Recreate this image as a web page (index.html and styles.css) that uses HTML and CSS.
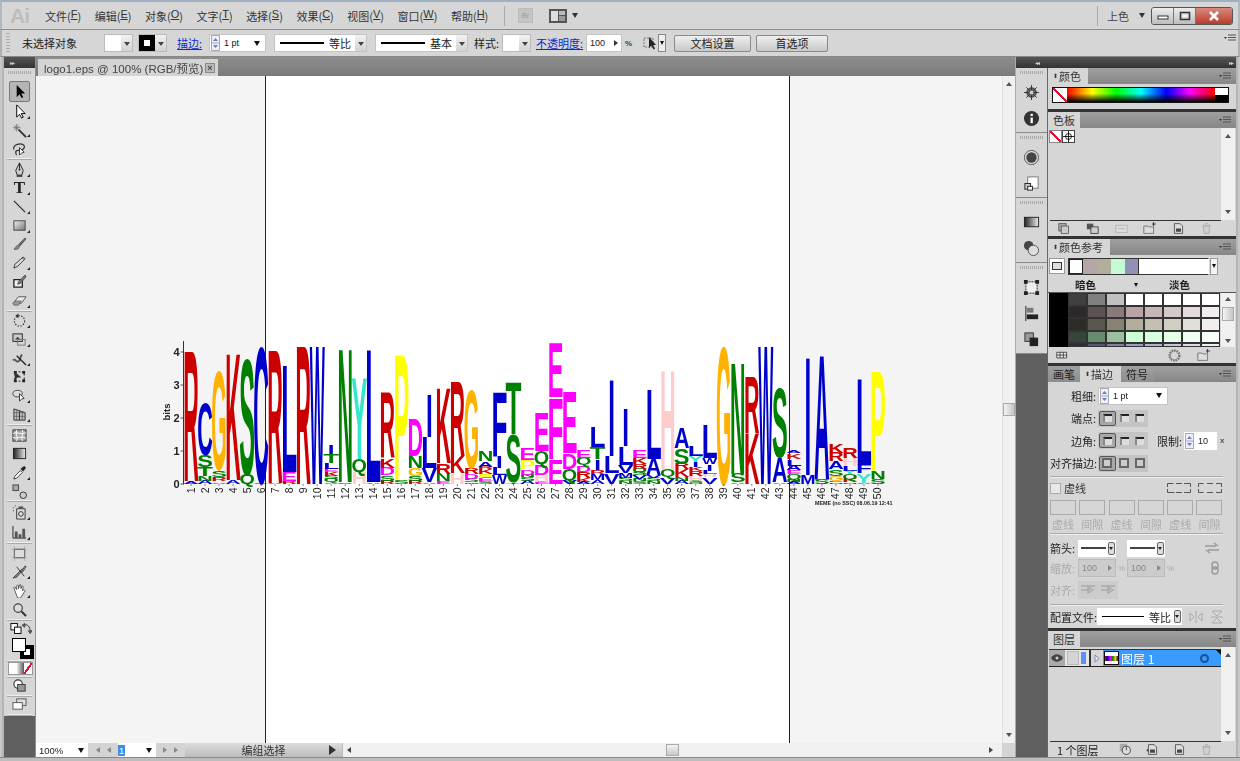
FILE: index.html
```html
<!DOCTYPE html>
<html lang="zh">
<head>
<meta charset="utf-8">
<title>Adobe Illustrator</title>
<link rel="stylesheet" href="styles.css">
</head>
<body>
<svg class="defs" width="0" height="0">
  <defs>
    <linearGradient id="gr" x1="0" y1="0" x2="1" y2="1"><stop offset="0" stop-color="#eee"/><stop offset="1" stop-color="#777"/></linearGradient>
    <linearGradient id="grh" x1="0" y1="0" x2="1" y2="0"><stop offset="0" stop-color="#222"/><stop offset="1" stop-color="#eee"/></linearGradient>
    <symbol id="menu" viewBox="0 0 12 8"><path d="M0 3h3L1.500 5z" fill="#333"/><path d="M4 1h8M4 3.500h8M4 6h8" stroke="#555"/></symbol>
    <symbol id="spin" viewBox="0 0 9 16"><rect x=".5" y=".5" width="8" height="15" fill="#eef" stroke="#aaa"/><path d="M.5 8h8" stroke="#aaa"/><path d="M4.500 3L7 6H2z" fill="#6a7fc0"/><path d="M2 10h5l-2.500 3z" fill="#6a7fc0"/></symbol>
    <symbol id="doc" viewBox="0 0 16 16"><path d="M3 2h7l3 3v9H3z" fill="#ddd" stroke="#444"/><path d="M5 8h6v4H5z" fill="#444"/></symbol>
    <symbol id="trash" viewBox="0 0 16 16"><path d="M4 5h8l-1 9H5z" fill="#ccc" stroke="#888"/><path d="M3 4h10M6 2h4" stroke="#888"/></symbol>
  </defs>
</svg>

<div class="window">
  <header class="titlebar">
    <span class="ai">Ai</span>
    <nav class="menus">
      <span class="m1">文件(<u>F</u>)</span><span class="m1">编辑(<u>E</u>)</span><span class="m1">对象(<u>O</u>)</span><span class="m1">文字(<u>T</u>)</span><span class="m1">选择(<u>S</u>)</span><span class="m1">效果(<u>C</u>)</span><span class="m1">视图(<u>V</u>)</span><span class="m1">窗口(<u>W</u>)</span><span class="m1">帮助(<u>H</u>)</span>
    </nav>
    <i class="vsep"></i>
    <span class="br">Br</span>
    <svg class="layout" viewBox="0 0 18 14"><rect width="18" height="14" fill="#555"/><rect x="2" y="2" width="7" height="10" fill="#ddd"/><rect x="10" y="2" width="6" height="4" fill="#bbb"/><rect x="10" y="7" width="6" height="5" fill="#999"/></svg>
    <b class="tri"></b>
    <span class="spacer"></span>
    <i class="vsep"></i>
    <span class="workspace">上色</span>
    <b class="tri"></b>
    <div class="winbtns">
      <span class="wb"><svg viewBox="0 0 12 8" width="12" height="8"><rect x="1" y="4" width="10" height="3" fill="#fff" stroke="#333"/></svg></span>
      <span class="wb"><svg viewBox="0 0 12 10" width="12" height="10"><rect x="1.500" y="1.500" width="9" height="7" fill="none" stroke="#333" stroke-width="1.500"/><rect x="4" y="4" width="4" height="2" fill="#fff"/></svg></span>
      <span class="wb close"><svg viewBox="0 0 12 10" width="12" height="10"><path d="M2 1l8 8M10 1l-8 8" stroke="#fff" stroke-width="2.600"/></svg></span>
    </div>
  </header>

  <div class="control">
    <span class="grip"></span>
    <span class="noselect">未选择对象</span>
    <span class="swatch w29"><i class="white"></i><b class="dd"></b></span>
    <span class="swatch w29 ml5"><i class="strokebox"></i><b class="dd"></b></span>
    <a class="lnk ml10">描边:</a>
    <span class="pt"><svg class="sp" width="9" height="16"><use href="#spin"/></svg><span class="ptv">1 pt</span><b class="tri dark"></b></span>
    <span class="linebox w93"><i class="ln thin"></i><span>等比</span><b class="dd"></b></span>
    <span class="linebox w93 ml8"><i class="ln thick"></i><span>基本</span><b class="dd"></b></span>
    <span class="lab ml6">样式:</span>
    <span class="swatch w29 ml4"><i class="white"></i><b class="dd"></b></span>
    <a class="lnk ml5">不透明度:</a>
    <span class="pct"><span>100</span><b class="rt"></b></span>
    <span class="pc">%</span>
    <svg class="ib" width="16" height="16" viewBox="0 0 16 16"><rect x="2" y="3" width="9" height="9" fill="none" stroke="#777" stroke-dasharray="2 1"/><path d="M7 2v11l2.500-2.500 2 4 1.500-1-2-3.500h3z" fill="#222"/></svg>
    <span class="mini"><b class="tri dark small"></b></span>
    <span class="btn w77">文档设置</span>
    <span class="btn w72">首选项</span>
    <span class="spacer"></span>
    <svg class="ctlmenu" width="12" height="8"><use href="#menu"/></svg>
  </div>

  <div class="work">
    <div class="frame"></div>

    <aside class="tools">
      <div class="collapse"><b class="dbl">▸▸</b></div>
      <div class="dots"></div>
      <div class="tg first">
        <span class="t sel"><svg viewBox="0 0 16 16"><path d="M5 1v13l3-3 2.300 4 1.700-1-2.200-3.800H14z" fill="#000"/></svg></span>
        <span class="t c"><svg viewBox="0 0 16 16"><path d="M5 1v13l3-3 2.300 4 1.700-1-2.200-3.800H14z" fill="#fff" stroke="#000"/></svg></span>
        <span class="t c"><svg viewBox="0 0 16 16"><path d="M7 7l8 8" stroke="#333" stroke-width="2"/><path d="M5 1v8M1 5h8M2.500 2.500l5 5M7.500 2.500l-5 5" stroke="#777"/></svg></span>
        <span class="t"><svg viewBox="0 0 16 16"><path d="M2 9c-2-5 8-8 11-4 1 2-1 5-5 5-3 0-4 0-4 2 0 1 0 2 1 3" fill="none" stroke="#333" stroke-width="1.300"/><path d="M8 7v8l2-2 3-1z" fill="#fff" stroke="#333"/></svg></span>
      </div>
      <div class="tg">
        <span class="t c"><svg viewBox="0 0 16 16"><path d="M8 1l4 8-1.500 5h-5L4 9z" fill="#ccc" stroke="#222"/><path d="M8 1v6" stroke="#222"/><circle cx="8" cy="8" r="1" fill="#222"/><path d="M5 15h6" stroke="#222" stroke-width="1.500"/></svg></span>
        <span class="t c ttext">T</span>
        <span class="t c"><svg viewBox="0 0 16 16"><path d="M2 2l12 12" stroke="#222" stroke-width="1.200"/></svg></span>
        <span class="t c"><svg viewBox="0 0 16 16"><rect x="2" y="3" width="12" height="10" fill="url(#gr)" stroke="#444"/></svg></span>
        <span class="t"><svg viewBox="0 0 16 16"><path d="M14 1L7 8l1.500 1.500L15 2z" fill="#666" stroke="#333" stroke-width=".6"/><path d="M6 9c-2 0-2 3-4 4 2 1 6 0 6-3z" fill="#888" stroke="#444" stroke-width=".6"/></svg></span>
        <span class="t c"><svg viewBox="0 0 16 16"><path d="M12 2l2 2-8 8-4 2 1-4z" fill="#ddd" stroke="#333"/><path d="M11 3l2 2" stroke="#333"/></svg></span>
        <span class="t"><svg viewBox="0 0 16 16"><path d="M2 6h9v8H2z" fill="#eee" stroke="#222" stroke-width="1.400"/><path d="M14 1L7 8l-1 3 3-1 6-7z" fill="#777" stroke="#333" stroke-width=".7"/></svg></span>
        <span class="t c"><svg viewBox="0 0 16 16"><path d="M1 11l6-7h8l-5 7z" fill="#e8e8e8" stroke="#555"/><path d="M1 11l2-2.500h7L8 11l-1 2H2z" fill="#999" stroke="#555" stroke-width=".7"/></svg></span>
      </div>
      <div class="tg">
        <span class="t c"><svg viewBox="0 0 16 16"><circle cx="8" cy="8.500" r="5.500" fill="none" stroke="#333" stroke-dasharray="1.500 1.500" stroke-width="1.200"/><path d="M7 .5v5L3.500 3z" fill="#333"/></svg></span>
        <span class="t c"><svg viewBox="0 0 16 16"><rect x="1" y="2" width="10" height="8" fill="#ccc" stroke="#222"/><path d="M3 8l3-3 3 3z" fill="#444"/><rect x="6" y="8" width="8" height="6" fill="none" stroke="#777"/></svg></span>
        <span class="t c"><svg viewBox="0 0 16 16"><path d="M1 10c3-3 3 3 6 1s1-6 4-7" fill="none" stroke="#555" stroke-width="2"/><path d="M5 5l10 10" stroke="#222" stroke-width="1.400"/></svg></span>
        <span class="t"><svg viewBox="0 0 16 16"><rect x="3" y="3" width="10" height="10" fill="none" stroke="#222" stroke-dasharray="2 2"/><path d="M2 2h3v3H2zM11 2h3v3h-3zM2 11h3v3H2zM11 11h3v3h-3z" fill="#222"/><path d="M3 3v9l3-3h4z" fill="#333"/></svg></span>
        <span class="t c"><svg viewBox="0 0 16 16"><ellipse cx="6" cy="6" rx="5" ry="3.500" fill="#ddd" stroke="#444"/><path d="M8 6v8l2-2 3-1z" fill="#fff" stroke="#333"/></svg></span>
        <span class="t c"><svg viewBox="0 0 16 16"><path d="M2 2l6 2v10H2zM8 4l6 2v8H8z" fill="#bbb" stroke="#333"/><path d="M2 6h12M2 10h12M5 3v11M11 5v9" stroke="#444" stroke-width=".6"/></svg></span>
      </div>
      <div class="tg">
        <span class="t"><svg viewBox="0 0 16 16"><rect x="1" y="2" width="14" height="12" fill="#aaa" stroke="#333"/><path d="M1 6c4-3 9 2 14-1M1 10c4 2 9-2 14 1M5 2c-2 4 2 8 0 12M11 2c2 4-2 8 0 12" fill="none" stroke="#fff"/></svg></span>
        <span class="t"><svg viewBox="0 0 16 16"><rect x="1.500" y="2.500" width="13" height="11" fill="url(#grh)" stroke="#222"/></svg></span>
        <span class="t c"><svg viewBox="0 0 16 16"><path d="M2 15l1-3 6-6 2 2-6 6z" fill="#fff" stroke="#333"/><path d="M9 4l3 3 3-4-2-2z" fill="#222"/></svg></span>
        <span class="t"><svg viewBox="0 0 16 16"><rect x="1" y="1" width="6" height="6" fill="#aaa" stroke="#444"/><circle cx="12" cy="12" r="3.500" fill="#ccc" stroke="#333"/><path d="M7 7l2 2" stroke="#888" stroke-dasharray="1 1"/></svg></span>
      </div>
      <div class="tg two">
        <span class="t c"><svg viewBox="0 0 16 16"><path d="M5 4h9v11H5z" fill="#ddd" stroke="#333"/><rect x="7" y="1.500" width="5" height="2.500" fill="#555"/><circle cx="9.500" cy="9.500" r="2.500" fill="none" stroke="#333"/><path d="M1 3h1M3 1h1M1 6h1" stroke="#333"/></svg></span>
        <span class="t c"><svg viewBox="0 0 16 16"><path d="M1 2v13h14" fill="none" stroke="#222"/><path d="M3 8h3v7H3zM7 11h3v4H7zM11 5h3v10h-3z" fill="#555"/></svg></span>
      </div>
      <div class="tg">
        <span class="t"><svg viewBox="0 0 16 16"><rect x="2.500" y="3.500" width="11" height="9" fill="#ddd" stroke="#333"/><path d="M0 3.500h16M0 12.500h16M2.500 0v16M13.500 0v16" stroke="#999" stroke-width=".6"/></svg></span>
        <span class="t c"><svg viewBox="0 0 16 16"><path d="M1 15L11 5l1 1L5 14z" fill="#888" stroke="#222" stroke-width=".7"/><path d="M10 8l4-6 1 1-4 6zM5 3l8 10" stroke="#333" fill="#ddd"/></svg></span>
        <span class="t c"><svg viewBox="0 0 16 16"><path d="M3 8L2 5l1-1 2 3V3l1-1 1 1v3l1-4h1.500v4l1.500-3 1 1-1 4 2-1 1 1-3 5-2 3H6z" fill="#fff" stroke="#333" stroke-width=".8"/></svg></span>
        <span class="t"><svg viewBox="0 0 16 16"><circle cx="6.500" cy="6.500" r="4.500" fill="#ddd" stroke="#444" stroke-width="1.300"/><path d="M10 10l5 5" stroke="#333" stroke-width="2.200"/></svg></span>
      </div>
      <div class="tg colors">
        <div class="swaprow">
          <svg width="13" height="13" viewBox="0 0 13 13"><rect x="1" y="1" width="7" height="7" fill="#fff" stroke="#000"/><rect x="5" y="5" width="7" height="7" fill="#fff" stroke="#000"/></svg>
          <svg width="11" height="13" viewBox="0 0 11 13"><path d="M1 3c5-2 8 1 8 8M0 3l3-2v4zM7 9l2 3 2-3z" fill="none" stroke="#333"/></svg>
        </div>
        <div class="fillstroke"><i class="stk"><i></i></i><i class="fil"></i></div>
      </div>
      <div class="tg modes">
        <span class="modebox"><i class="mw"></i><i class="mg"></i><i class="mn"></i></span>
      </div>
      <div class="tg mono"><span class="t"><svg viewBox="0 0 16 16"><circle cx="6.500" cy="6.500" r="4.500" fill="#fff" stroke="#333" stroke-width="1.200"/><rect x="6" y="7" width="8" height="7" fill="#999" stroke="#333"/></svg></span></div>
      <div class="tg mono"><span class="t"><svg viewBox="0 0 16 16"><rect x="5" y="2" width="10" height="7" fill="#ddd" stroke="#555"/><rect x="1" y="6" width="10" height="7" fill="#fff" stroke="#555"/></svg></span></div>
      <div class="tools-end"></div>
    </aside>

    <main class="doc">
      <div class="tabbar">
        <div class="tab"><span class="tabtext">logo1.eps @ 100% (RGB/预览)</span><span class="tabx">×</span></div>
      </div>
      <div class="docmid">
        <div class="canvas">
          <div class="paste left"></div>
          <div class="artboard"></div>
          <div class="paste"></div>
          <svg id="logo" class="logo" viewBox="160 335 735 175" width="735" height="175"></svg>
        </div>
        <div class="vscroll">
          <b class="arr up"></b>
          <span class="vthumb"></span>
          <b class="arr down"></b>
        </div>
      </div>
      <div class="docbottom">
        <span class="zoomsel">100%<b class="tri dark"></b></span>
        <span class="nav"><b class="nv l2"></b><b class="nv l1"></b></span>
        <span class="pagesel"><em>1</em><b class="tri dark"></b></span>
        <span class="nav r"><b class="nv r1"></b><b class="nv r2"></b></span>
        <span class="status">编组选择<b class="rt big"></b></span>
        <span class="hscroll"><b class="harr l"></b><span class="hthumb"></span><b class="harr rr"></b></span>
      </div>
    </main>

    <section class="dock">
      <div class="dockbar"><b class="dbl">◂◂</b><b class="dbl">▸▸</b></div>
      <div class="dockbody">
        <div class="strip">
          <div class="sg">
            <div class="dots"></div>
            <svg class="si" viewBox="0 0 18 18"><circle cx="9" cy="9" r="5" fill="#666" stroke="#333"/><path d="M9 1v16M1 9h16M3.500 3.500l11 11M14.500 3.500l-11 11" stroke="#333"/><circle cx="9" cy="9" r="2" fill="#ccc"/></svg>
            <svg class="si" viewBox="0 0 18 18"><circle cx="9" cy="9" r="8" fill="#333"/><rect x="8" y="8" width="2.400" height="6" fill="#fff"/><rect x="8" y="4" width="2.400" height="2.400" fill="#fff"/></svg>
          </div>
          <div class="sg">
            <div class="dots"></div>
            <svg class="si" viewBox="0 0 18 18"><circle cx="9" cy="9" r="7.500" fill="#ddd" stroke="#555"/><circle cx="9" cy="9" r="5.500" fill="#444"/></svg>
            <svg class="si" viewBox="0 0 18 18"><rect x="5" y="2" width="11" height="12" fill="#fff" stroke="#777"/><rect x="2" y="9" width="6" height="6" fill="#ccc" stroke="#222"/><rect x="5" y="12" width="5" height="4" fill="#fff" stroke="#222"/></svg>
          </div>
          <div class="sg">
            <div class="dots"></div>
            <svg class="si" viewBox="0 0 18 18"><rect x="1.500" y="3.500" width="15" height="10" fill="url(#grh)" stroke="#222"/></svg>
            <svg class="si" viewBox="0 0 18 18"><circle cx="6" cy="6" r="5" fill="#444"/><circle cx="11" cy="11" r="5.500" fill="#ddd" stroke="#555"/></svg>
          </div>
          <div class="sg long">
            <div class="dots"></div>
            <svg class="si" viewBox="0 0 18 18"><rect x="3" y="3" width="12" height="12" fill="#eee" stroke="#222" stroke-dasharray="2 1"/><path d="M1 1h4v4H1zM13 1h4v4h-4zM1 13h4v4H1zM13 13h4v4h-4z" fill="#222"/></svg>
            <svg class="si" viewBox="0 0 18 18"><path d="M3 1v16" stroke="#222"/><rect x="4" y="3" width="7" height="5" fill="#777"/><rect x="4" y="10" width="12" height="5" fill="#222"/></svg>
            <svg class="si" viewBox="0 0 18 18"><rect x="2" y="2" width="9" height="9" fill="#999" stroke="#333"/><rect x="7" y="7" width="9" height="9" fill="#222"/></svg>
          </div>
          <div class="stripend"></div>
        </div>

        <div class="panels">
          <div class="panel p-color">
            <div class="ptabs"><span class="ptab w40"><i class="updn">⬍</i>颜色</span><span class="pfill"><svg width="12" height="8"><use href="#menu"/></svg></span></div>
            <div class="pbody colorbody">
              <div class="spectrum"><i class="none"></i><i class="rainbow"></i><i class="bw"></i></div>
            </div>
          </div>
          <div class="panel p-swatch">
            <div class="ptabs"><span class="ptab w32">色板</span><span class="pfill"><svg width="12" height="8"><use href="#menu"/></svg></span></div>
            <div class="pbody listbody">
              <div class="listmain">
                <div class="swrow"><i class="none sq"></i><i class="reg sq"><svg viewBox="0 0 13 13"><circle cx="6.500" cy="6.500" r="3.500" fill="none" stroke="#000"/><path d="M6.500 0v13M0 6.500h13" stroke="#000"/></svg></i></div>
              </div>
              <div class="sbar"><b class="arr up"></b><b class="arr down"></b></div>
            </div>
            <div class="pfoot">
              <svg class="fi" viewBox="0 0 16 16"><rect x="1" y="2" width="9" height="9" fill="#aaa" stroke="#555"/><rect x="4" y="5" width="9" height="9" fill="#ccc" stroke="#555"/></svg>
              <svg class="fi" viewBox="0 0 16 16"><rect x="1" y="2" width="8" height="7" fill="#555"/><rect x="6" y="6" width="9" height="8" fill="#ccc" stroke="#333"/></svg>
              <svg class="fi dim" viewBox="0 0 16 16"><rect x="1" y="4" width="14" height="9" fill="#ddd" stroke="#999"/><path d="M4 8h8" stroke="#999"/></svg>
              <svg class="fi" viewBox="0 0 16 16"><path d="M1 5h5l1 1h6v8H1z" fill="#ddd" stroke="#666"/><path d="M13 0v5M11 2.500h5" stroke="#222"/></svg>
              <svg class="fi" viewBox="0 0 16 16"><use href="#doc"/></svg>
              <svg class="fi dim" viewBox="0 0 16 16"><use href="#trash"/></svg>
            </div>
          </div>
          <div class="panel p-guide">
            <div class="ptabs"><span class="ptab w62"><i class="updn">⬍</i>颜色参考</span><span class="pfill"><svg width="12" height="8"><use href="#menu"/></svg></span></div>
            <div class="pbody guide">
              <div class="harm">
                <span class="hbase"><i></i></span>
                <span class="hbar"><i class="c0"></i><i class="c1"></i><i class="c2"></i><i class="c3"></i><i class="c4"></i></span>
                <span class="hdrop"><b class="tri dark small"></b></span>
              </div>
              <div class="shade"><span>暗色</span><b class="tri dark small"></b><span>淡色</span></div>
              <div class="gridwrap">
                <div class="blk"></div>
                <div class="cgrid">
                  <i class="a1"></i><i class="a2"></i><i class="a3"></i><i class="w"></i><i class="w"></i><i class="w"></i><i class="w"></i><i class="w"></i>
                  <i class="b1"></i><i class="b2"></i><i class="b3"></i><i class="b4"></i><i class="b5"></i><i class="b6"></i><i class="b7"></i><i class="b8"></i>
                  <i class="c1x"></i><i class="c2x"></i><i class="c3x"></i><i class="c4x"></i><i class="c5x"></i><i class="c6x"></i><i class="c7x"></i><i class="c8x"></i>
                  <i class="d1"></i><i class="d2"></i><i class="d3"></i><i class="d4"></i><i class="d5"></i><i class="d6"></i><i class="d7"></i><i class="d8"></i>
                  <i class="e1"></i><i class="e2"></i><i class="e3"></i><i class="e4"></i><i class="e5"></i><i class="e6"></i><i class="e7"></i><i class="e8"></i>
                </div>
                <div class="sbar grey"><b class="arr up"></b><span class="gthumb"></span><b class="arr down"></b></div>
              </div>
              <div class="gfoot">
                <svg class="fi" viewBox="0 0 16 12"><path d="M1 2h12v7H1zM1 5.500h12M5 2v7M9 2v7" fill="#eee" stroke="#333"/></svg>
                <span class="spacer"></span>
                <svg class="fi dim" viewBox="0 0 16 16"><circle cx="8" cy="8" r="6" fill="none" stroke="#333" stroke-width="3" stroke-dasharray="2 1"/></svg>
                <svg class="fi" viewBox="0 0 16 16"><path d="M1 5h5l1 1h6v8H1z" fill="#ddd" stroke="#666"/><path d="M13 0v5M11 2.500h5" stroke="#222"/></svg>
              </div>
            </div>
          </div>
          <div class="panel p-stroke">
            <div class="ptabs"><span class="ptab off w32">画笔</span><span class="ptab w41"><i class="updn">⬍</i>描边</span><span class="ptab off w33">符号</span><span class="pfill"><svg width="12" height="8"><use href="#menu"/></svg></span></div>
            <div class="pbody stroke">
              <div class="row r1st"><label class="l46">粗细:</label><span class="pt panelpt"><svg class="sp" width="9" height="16"><use href="#spin"/></svg><span class="ptv">1 pt</span><b class="tri dark"></b></span></div>
              <div class="row"><label class="l46">端点:</label><span class="seg"><i class="on"><u class="cap"></u></i><i><u class="cap"></u></i><i><u class="cap"></u></i></span></div>
              <div class="row"><label class="l46">边角:</label><span class="seg"><i class="on"><u class="cap"></u></i><i><u class="cap"></u></i><i><u class="cap"></u></i></span><label class="limit">限制:</label><span class="lim"><svg class="sp" width="9" height="16"><use href="#spin"/></svg><em>10</em></span><span class="x">x</span></div>
              <div class="row"><label class="l46 wide">对齐描边:</label><span class="seg"><i class="on"><u class="sq2"></u></i><i><u class="sq2"></u></i><i><u class="sq2"></u></i></span></div>
              <hr class="rule r-a">
              <div class="row dash"><span class="check"></span><label>虚线</label><span class="spacer"></span>
                <svg width="24" height="10" viewBox="0 0 24 10"><path d="M.5 4V.5h6M9 .5h6M17 .5h6.500V4M.5 6v3.500h7M9 9.500h6M17 9.500h6.500V6" fill="none" stroke="#555"/></svg>
                <svg class="dashb" width="24" height="10" viewBox="0 0 24 10"><path d="M.5 4V.5h5M18 .5h5.500V4M.5 6v3.500h5M18 9.500h5.500V6M9 .5h6M9 9.500h6" fill="none" stroke="#555"/></svg>
              </div>
              <div class="boxes"><i></i><i></i><i></i><i></i><i></i><i></i></div>
              <div class="boxlabels"><span>虚线</span><span>间隙</span><span>虚线</span><span>间隙</span><span>虚线</span><span>间隙</span></div>
              <hr class="rule">
              <div class="row arrows"><label>箭头:</label><span class="asel"><i></i><b class="dropbtn"></b></span><span class="asel a2"><i></i><b class="dropbtn"></b></span><span class="spacer"></span><svg class="swapi" width="16" height="12" viewBox="0 0 16 12"><path d="M1 4h11M10 1l4 3M15 8H4M6 11L2 8" fill="none" stroke="#999" stroke-width="1.300"/></svg></div>
              <div class="row scale"><label class="dim">缩放:</label><span class="num"><em>100</em><b class="rt"></b></span><span class="dim pcs">%</span><span class="num"><em>100</em><b class="rt"></b></span><span class="dim pcs">%</span><span class="spacer"></span><svg class="swapi" width="10" height="14" viewBox="0 0 10 14"><rect x="2" y="1" width="6" height="7" rx="3" fill="none" stroke="#999" stroke-width="1.400"/><rect x="2" y="6" width="6" height="7" rx="3" fill="none" stroke="#999" stroke-width="1.400"/></svg></div>
              <div class="row align"><label class="dim">对齐:</label><span class="alignbox"><svg width="16" height="12" viewBox="0 0 16 12"><path d="M1 2h14M1 6h9M8 3l5 3-5 3zM1 11h0" fill="none" stroke="#aaa" stroke-width="1.300"/></svg><svg width="16" height="12" viewBox="0 0 16 12"><path d="M1 2h14M1 6h9M8 3l5 3-5 3z" fill="none" stroke="#aaa" stroke-width="1.300"/></svg></span></div>
              <hr class="rule r-b">
              <div class="row profile"><label>配置文件:</label><span class="psel"><i></i><span>等比</span><b class="dropbtn"></b></span>
                <svg class="pi" width="14" height="12" viewBox="0 0 14 12"><path d="M7 0v12M1 2l4 4-4 4zM13 2L9 6l4 4z" fill="none" stroke="#aaa"/></svg>
                <svg class="pi" width="14" height="14" viewBox="0 0 14 14"><path d="M1 7h12M2 1h10L7 6zM2 13h10L7 8z" fill="none" stroke="#aaa"/></svg>
              </div>
            </div>
          </div>
          <div class="panel p-layers">
            <div class="ptabs"><span class="ptab w32">图层</span><span class="pfill"><svg width="12" height="8"><use href="#menu"/></svg></span></div>
            <div class="pbody listbody">
              <div class="listmain">
                <div class="layer">
                  <span class="lvis"><svg width="14" height="10" viewBox="0 0 14 10"><path d="M1 5c3-5 9-5 12 0-3 5-9 5-12 0z" fill="#444"/><circle cx="7" cy="5" r="1.500" fill="#ccc"/></svg></span>
                  <span class="llock"></span>
                  <span class="lcol"></span>
                  <span class="lexp"><svg width="6" height="9" viewBox="0 0 6 9"><path d="M1 1l4 3.500L1 8z" fill="#eef" stroke="#7a8aa0"/></svg></span>
                  <span class="lsel">
                    <span class="thumb"><i></i></span>
                    <span class="lname">图层 1</span>
                    <span class="spacer"></span>
                    <span class="ring"></span>
                    <b class="corner"></b>
                  </span>
                </div>
              </div>
              <div class="sbar"><b class="arr up"></b><b class="arr down"></b></div>
            </div>
            <div class="pfoot layersfoot">
              <span class="lcount">1 个图层</span>
              <svg class="fi" viewBox="0 0 16 16"><rect x="1" y="1" width="9" height="9" fill="#aaa"/><circle cx="9" cy="9" r="5" fill="#ddd" stroke="#333"/><path d="M9 5v4" stroke="#333"/></svg>
              <svg class="fi" viewBox="0 0 16 16"><path d="M1 9h5M4 7l-3 2 3 2" fill="none" stroke="#222"/><use href="#doc"/></svg>
              <svg class="fi" viewBox="0 0 16 16"><use href="#doc"/></svg>
              <svg class="fi dim" viewBox="0 0 16 16"><use href="#trash"/></svg>
            </div>
          </div>
        </div>
      </div>
    </section>
    <div class="frame rightf"></div>
  </div>
  <div class="bottomframe"></div>
</div>
<script src="logo.js"></script>
</body>
</html>
```
FILE: styles.css
```css
* { box-sizing: border-box; }
html, body { margin: 0; padding: 0; height: 100%; }
body { width: 1240px; height: 761px; overflow: hidden; font: 11px "Noto Sans CJK SC", "Liberation Sans", sans-serif; color: #222; background: #d6d6d6; }
.defs { position: absolute; }
i, b, em, u { font-style: normal; text-decoration: none; display: block; }
.spacer { flex: 1; }
.window { width: 1240px; height: 761px; display: flex; flex-direction: column; filter: blur(.35px); }

/* title */
.titlebar { height: 30px; display: flex; align-items: center; background: #d6d6d6; border-top: 2px solid #9fb0c0; border-left: 2px solid #b0b8c0; border-right: 2px solid #b0b8c0; border-bottom: 1px solid #8c8c8c; padding-left: 8px; flex: none; }
.ai { width: 35px; font: bold 21px "Liberation Sans", sans-serif; color: #bdbdbd; letter-spacing: -1px; }
.menus { display: flex; width: 458px; font-size: 11px; }
.m1 { margin-right: 13.500px; white-space: nowrap; color: #333; display: flex; }
.m1 u { text-decoration: underline; font-family: "Liberation Sans", sans-serif; }
.vsep { width: 1px; height: 20px; background: #aaa; }
.titlebar .vsep { margin-left: 1px; }
.br { width: 15px; height: 15px; margin-left: 13px; background: #c4c4c4; border: 1px solid #bbb; font: 7px "Liberation Sans", sans-serif; color: #999; text-align: center; line-height: 13px; }
.layout { width: 18px; height: 14px; margin-left: 16px; }
.tri { width: 0; height: 0; border-left: 3.500px solid transparent; border-right: 3.500px solid transparent; border-top: 5px solid #333; margin-left: 5px; }
.tri.small { border-left-width: 2.500px; border-right-width: 2.500px; border-top-width: 4px; margin: 0; }
.tri.dark { border-top-color: #111; }
.workspace { font-size: 11px; color: #444; margin-left: 9px; }
.workspace + .tri { margin-left: 10px; }
.winbtns { display: flex; margin: 0 5px 0 6px; width: 82px; height: 18px; border: 1px solid #555; border-radius: 3px; overflow: hidden; }
.wb { width: 22px; display: flex; align-items: center; justify-content: center; background: linear-gradient(#ececec, #bdbdbd); border-right: 1px solid #777; }
.wb.close { flex: 1; border: 0; background: linear-gradient(#d98a7e, #b83a2e); }

/* control */
.control { height: 27px; display: flex; align-items: center; background: #d6d6d6; border-bottom: 1px solid #888; border-left: 2px solid #b0b0b0; border-right: 2px solid #b0b0b0; padding-left: 4px; flex: none; }
.grip { width: 4px; height: 20px; margin-right: 12px; background: repeating-linear-gradient(#aaa 0 1px, transparent 1px 3px); }
.noselect { width: 82px; font-size: 11px; color: #222; }
.swatch { height: 18px; display: flex; background: #eee; border: 1px solid #bbb; }
.w29 { width: 29px; }
.swatch .white { flex: 1; background: #fff; }
.strokebox { flex: 1; background: #000; position: relative; display: flex; align-items: center; justify-content: center; }
.strokebox::after { content: ""; width: 6px; height: 6px; background: #fff; display: block; }
.dd { width: 11px; background: linear-gradient(#f2f2f2, #d2d2d2) ; position: relative; }
.dd::after { content: ""; position: absolute; left: 2.500px; top: 7px; border-left: 3px solid transparent; border-right: 3px solid transparent; border-top: 4px solid #444; }
.ml4 { margin-left: 4px; } .ml5 { margin-left: 5px; } .ml6 { margin-left: 6px; } .ml8 { margin-left: 8px; } .ml10 { margin-left: 10px; }
.lnk { color: #0a2bd0; font-size: 11px; text-decoration: underline; white-space: nowrap; }
.control .lnk:first-of-type { width: 24px; }
.pt { width: 57px; height: 18px; margin-left: 8px; margin-right: 8px; display: flex; align-items: center; background: #fff; border: 1px solid #c4c4c4; }
.sp { flex: none; margin-left: 1px; }
.ptv { flex: 1; font: 9px "Liberation Sans", sans-serif; margin-left: 4px; color: #111; }
.pt .tri { margin: 0 5px 0 0; }
.linebox { height: 18px; display: flex; align-items: center; background: #fff; border: 1px solid #c4c4c4; }
.w93 { width: 93px; }
.linebox .ln { flex: 1; margin: 0 5px; background: #000; }
.ln.thin { height: 1.500px; } .ln.thick { height: 2.500px; }
.linebox span { font-size: 11px; margin-right: 4px; }
.linebox .dd { align-self: stretch; }
.lab { width: 24px; white-space: nowrap; }
.pct { width: 36px; height: 18px; margin-left: 3px; display: flex; align-items: center; justify-content: space-between; background: #fff; border: 1px solid #c4c4c4; padding-left: 3px; font: 9px "Liberation Sans", sans-serif; }
.rt { width: 0; height: 0; border-top: 3px solid transparent; border-bottom: 3px solid transparent; border-left: 4px solid #333; margin-right: 3px; }
.rt.big { border-top-width: 5px; border-bottom-width: 5px; border-left-width: 7px; position: absolute; right: 3px; top: 2px; }
.pc { margin-left: 3px; font: bold 8px "Liberation Sans", sans-serif; color: #444; width: 9px; }
.ib { margin-left: 8px; }
.mini { width: 8px; height: 18px; margin-left: 0; background: #eee; border: 1px solid #888; display: flex; align-items: center; justify-content: center; }
.btn { height: 17px; margin-left: 5px; text-align: center; line-height: 15px; font-size: 11px; background: linear-gradient(#efefef, #c8c8c8); border: 1px solid #8a8a8a; border-radius: 2px; color: #222; }
.mini + .btn { margin-left: 8px; }
.w77 { width: 77px; } .w72 { width: 72px; }
.ctlmenu { align-self: flex-start; margin: 4px 2px 0 0; }

/* work */
.work { flex: 1; display: flex; min-height: 0; }
.frame { width: 4px; background: #b4b4b4; flex: none; border-left: 2px solid #c8c8c8; }
.rightf { border: 0; border-right: 2px solid #c8c8c8; }
.bottomframe { height: 4px; background: #bdbdbd; flex: none; border-top: 1px solid #888; }

/* tools */
.tools { width: 32px; flex: none; display: flex; flex-direction: column; background: #d6d6d6; border-right: 1px solid #8f8f8f; }
.collapse { height: 11px; background: linear-gradient(#555, #333); display: flex; align-items: center; padding-left: 6px; }
.dbl { font: 6px "Liberation Sans", sans-serif; color: #ccc; letter-spacing: -1px; }
.dots { height: 3px; margin: 3px 4px 0; background: repeating-linear-gradient(90deg, #aaa 0 1px, transparent 1px 2px); flex: none; }
.tg { padding: 1px 0 0; border-bottom: 1px solid #eee; display: flex; flex-direction: column; margin: 0 3px; flex: none; box-shadow: 0 1px 0 #aaa; }
.tg.first { padding-top: 8px; margin-top: 0; }
.tg .t { height: 18.700px; display: flex; align-items: center; justify-content: center; position: relative; }
.tg.two .t { height: 19.700px; }
.t svg { width: 15px; height: 15px; display: block; }
.t.sel { width: 21px; height: 21px; margin: -1px 2px 0; background: #b5b5b5; border: 1px solid #777; border-radius: 2px; flex: none; }
.t.c::after { content: ""; position: absolute; right: 2px; bottom: 2px; border-left: 3px solid transparent; border-bottom: 3px solid #222; }
.ttext { font: bold 17px "Liberation Serif", serif; color: #222; }
.colors { padding: 0; height: 41px; }
.swaprow { height: 18px; display: flex; justify-content: space-between; align-items: center; padding: 0 0 0 3px; }
.fillstroke { position: relative; height: 21px; }
.fil { position: absolute; left: 5px; top: 0; width: 14px; height: 14px; background: #fff; border: 1px solid #000; }
.stk { position: absolute; left: 13px; top: 7px; width: 14px; height: 14px; background: #000; display: flex; align-items: center; justify-content: center; }
.stk i { width: 6px; height: 6px; background: #fff; }
.modes { height: 16px; padding: 1px 0 0; }
.modebox { display: flex; width: 25px; height: 13px; margin-left: 1px; border: 1px solid #999; background: #fff; }
.modebox i { flex: 1; }
.mw { background: #fff; }
.mg { background: linear-gradient(90deg, #eee, #555); }
.mn { background: linear-gradient(to bottom right, #fff 42%, #e01030 42% 58%, #fff 58%); }
.mono { height: 19px; padding: 0; }
.tools-end { flex: 1; background: #5f5f5f; margin-top: 1px; min-height: 0; }

/* doc */
.doc { flex: 1; min-width: 0; display: flex; flex-direction: column; }
.tabbar { height: 19px; flex: none; background: linear-gradient(#8d8d8d, #7a7a7a); padding: 2px 0 0 2px; }
.tab { width: 180px; height: 17px; display: flex; align-items: center; justify-content: space-between; background: #d4d4d4; padding: 0 3px 0 6px; }
.tabtext { font: 11.500px "Liberation Sans", "Noto Sans CJK SC", sans-serif; color: #444; white-space: nowrap; }
.tabx { width: 10px; height: 10px; border: 1px solid #888; background: #bbb; font: bold 9px/8px "Liberation Sans", sans-serif; color: #444; text-align: center; }
.docmid { flex: 1; display: flex; min-height: 0; }
.canvas { flex: 1; display: flex; position: relative; min-width: 0; }
.paste { flex: 1; background: #f4f4f4; }
.paste.left { flex: none; width: 229px; }
.artboard { width: 525px; background: #fff; border-left: 1px solid #222; border-right: 1px solid #222; flex: none; }
.logo { position: absolute; left: 124px; top: 259px; overflow: visible; }
.logo text { font-family: "Liberation Sans", sans-serif; font-weight: bold; }
.lt { font-size: 20px; text-anchor: middle; }
.logo .num-l { font-size: 10.500px; font-weight: normal; fill: #222; text-anchor: end; }
.tick-l { font-size: 11px; fill: #222; text-anchor: end; }
.bits { font-size: 9.500px; fill: #222; text-anchor: middle; }
.meme { font-size: 5.350px; fill: #222; }
.A,.C,.F,.I,.L,.M,.V,.W { fill: #0000cc; }
.D,.E { fill: #ff00ff; }
.G { fill: #ffb300; }
.H { fill: #ffcccc; }
.K,.R { fill: #cc0000; }
.N,.Q,.S,.T { fill: #008000; }
.P { fill: #ffff00; }
.Y { fill: #33e6cc; }
.vscroll { width: 13px; background: #f0f0f0; border-left: 1px solid #e0e0e0; display: flex; flex-direction: column; align-items: center; justify-content: space-between; padding: 6px 0; flex: none; position: relative; }
.arr { width: 0; height: 0; border-left: 3px solid transparent; border-right: 3px solid transparent; }
.arr.up { border-bottom: 4px solid #555; }
.arr.down { border-top: 4px solid #555; }
.vthumb { width: 12px; height: 13px; background: linear-gradient(90deg, #f4f4f4, #c4c4c4); border: 1px solid #aaa; }
.docbottom { height: 14px; flex: none; display: flex; align-items: center; background: #d4d4d4; font: 9.500px "Liberation Sans", sans-serif; }
.zoomsel { width: 52px; height: 14px; background: #fff; display: flex; align-items: center; justify-content: space-between; padding: 0 4px 0 3px; }
.nav { width: 30px; display: flex; justify-content: space-around; padding: 0 4px; }
.nav.r { width: 29px; }
.nv { width: 0; height: 0; border-top: 3px solid transparent; border-bottom: 3px solid transparent; }
.l1, .l2 { border-right: 4px solid #888; }
.r1, .r2 { border-left: 4px solid #888; }
.pagesel { width: 38px; height: 14px; background: #fff; display: flex; align-items: center; justify-content: space-between; padding-right: 4px; }
.pagesel em { background: #3b8ee8; color: #fff; padding: 0 1px; }
.status { width: 157px; height: 14px; position: relative; background: linear-gradient(#dcdcdc, #bcbcbc); font: 11px/14px "Noto Sans CJK SC", sans-serif; text-align: center; color: #333; }
.hscroll { flex: 1; height: 14px; position: relative; display: flex; align-items: center; justify-content: space-between; padding: 0 9px 0 4px; background: #f0f0f0; border-left: 1px solid #bbb; }
.harr.l { border-top: 3px solid transparent; border-bottom: 3px solid transparent; border-right: 4px solid #444; }
.harr.rr { border-top: 3px solid transparent; border-bottom: 3px solid transparent; border-left: 4px solid #444; }
.harr { width: 0; height: 0; }
.hthumb { width: 13px; height: 12px; background: linear-gradient(#f4f4f4, #c8c8c8); border: 1px solid #aaa; position: relative; left: 2px; }
.doc > .docbottom .hscroll { margin-right: 13px; }
.docbottom { padding-right: 0; }

/* dock */
.dock { width: 221px; flex: none; display: flex; flex-direction: column; background: #5f5f5f; border-left: 1px solid #aaa; }
.dockbar { height: 11px; flex: none; background: linear-gradient(#555, #333); display: flex; justify-content: space-between; align-items: center; padding: 0 3px 0 19px; }
.dockbody { flex: 1; display: flex; min-height: 0; }
.strip { width: 31px; flex: none; display: flex; flex-direction: column; background: #5f5f5f; }
.sg { height: 65px; flex: none; background: #d6d6d6; border-bottom: 1px solid #888; display: flex; flex-direction: column; align-items: center; gap: 7px; }
.sg .dots { align-self: stretch; margin-bottom: 3px; }
.sg.long { height: 91px; }
.si { width: 17px; height: 17px; flex: none; margin-bottom: 2px; }
.stripend { flex: 1; }
.panels { width: 189px; flex: none; display: flex; flex-direction: column; background: #333; border-left: 1px solid #666; }
.panel { display: flex; flex-direction: column; background: #d6d6d6; margin-bottom: 3px; flex: none; }
.ptabs { height: 16px; display: flex; flex: none; background: #8a8a8a; }
.ptab { height: 16px; padding-left: 5px; background: #d6d6d6; font-size: 11px; line-height: 16px; color: #333; white-space: nowrap; flex: none; display: flex; align-items: center; }
.ptab.off { background: linear-gradient(#a0a0a0, #8e8e8e); color: #222; }
.updn { font-size: 6px; width: 5px; overflow: hidden; margin-right: 1px; color: #333; }
.w40 { width: 40px; } .w32 { width: 32px; } .w62 { width: 62px; } .w41 { width: 41px; } .w33 { width: 33px; }
.pfill { flex: 1; display: flex; justify-content: flex-end; align-items: center; padding-right: 5px; background: linear-gradient(#a0a0a0, #868686); }
.pbody { flex: 1; }
.p-color { height: 41px; }
.colorbody { padding: 3px 8px 0 4px; }
.spectrum { display: flex; height: 16px; border: 1px solid #111; width: 177px; }
.spectrum .none, .none { background: linear-gradient(to top right, #fff 44%, #e01030 44% 56%, #fff 56%); }
.spectrum .none { width: 14px; }
.rainbow { flex: 1; background: linear-gradient(transparent 40%, #000), linear-gradient(90deg, #f00, #ff0 17%, #0f0 33%, #0ff 50%, #00f 67%, #f0f 83%, #f00); }
.bw { width: 13px; background: linear-gradient(#fff 50%, #000 50%); }
.p-swatch { height: 124px; }
.listbody { display: flex; min-height: 0; }
.listmain { flex: 1; padding: 2px 0 0 1px; }
.swrow { display: flex; }
.sq { width: 13px; height: 13px; }
.swrow .none { border: 1px solid #888; }
.reg { border: 1px solid #444; background: #fff; }
.reg svg { width: 11px; height: 11px; display: block; }
.sbar { width: 14px; background: #f0f0f0; margin-right: 1px; display: flex; flex-direction: column; align-items: center; justify-content: space-between; padding: 6px 0; flex: none; }
.pfoot { height: 16px; flex: none; margin-right: 15px; margin-left: 2px; border-top: 1px solid #333; display: flex; align-items: center; justify-content: space-around; }
.fi { width: 13px; height: 13px; flex: none; }
.dim { color: #aaa; }
svg.dim { opacity: .6; }
.p-guide { height: 124px; }
.guide { display: flex; flex-direction: column; }
.harm { height: 22px; display: flex; align-items: center; padding-left: 1px; flex: none; }
.hbase { width: 16px; height: 16px; background: #fff; border: 1px solid #999; display: flex; align-items: center; justify-content: center; }
.hbase i { width: 10px; height: 8px; border: 1px solid #333; background: #ddd; }
.hbar { width: 141px; height: 17px; margin-left: 3px; display: flex; background: #fff; border: 1px solid #333; border-right-color: #fff; padding: 0; }
.hbar i { width: 14px; }
.c0 { background: #fff; border: 1px solid #222; }
.c1 { background: #b6a5a5; } .c2 { background: #b2ae9c; } .c3 { background: #c5fbd2; } .c4 { background: #9191b5; border-right: 1px solid #333; }
.hdrop { width: 8px; height: 17px; margin-left: 1px; background: #f4f4f4; border: 1px solid #999; display: flex; align-items: center; justify-content: center; }
.shade { height: 15px; flex: none; display: flex; align-items: center; gap: 38px; font-size: 10.500px; font-weight: bold; padding-left: 27px; }
.shade .tri { margin-right: -7px; }
.gridwrap { height: 55px; display: flex; padding-left: 1px; flex: none; border-top: 1px solid #555; }
.blk { width: 19px; background: #000; flex: none; }
.cgrid { width: 152px; display: grid; grid-template-columns: repeat(8, 19px); grid-template-rows: repeat(4, 12.500px) 4px; background: #333; gap: 0; overflow: hidden; }
.cgrid i { border: .5px solid #333; }
.w { background: #fff; }
.a1 { background: #404040; } .a2 { background: #808080; } .a3 { background: #c0c0c0; }
.b1 { background: #2e2929; } .b2 { background: #5c5252; } .b3 { background: #8a7b7b; } .b4 { background: #b8a4a4; } .b5 { background: #c6b6b6; } .b6 { background: #d4c8c8; } .b7 { background: #e3dbdb; } .b8 { background: #f1eded; }
.c1x { background: #2d2c27; } .c2x { background: #5a574e; } .c3x { background: #868375; } .c4x { background: #b3ae9c; } .c5x { background: #c2beb0; } .c6x { background: #d1cec4; } .c7x { background: #e1dfd7; } .c8x { background: #f0efeb; }
.d1 { background: #33463a; } .d2 { background: #678b6f; } .d3 { background: #9ac0a0; } .d4 { background: #cdffd5; } .d5 { background: #d9ffdf; } .d6 { background: #e6ffe8; } .d7 { background: #ecfff0; } .d8 { background: #f6fff8; }
.e1 { background: #2a2a40; } .e2 { background: #55557a; } .e3 { background: #7f7fa5; } .e4 { background: #9a9ac4; } .e5 { background: #b0b0d0; } .e6 { background: #c5c5e0; } .e7 { background: #dcdcee; } .e8 { background: #eeeef6; }
.sbar.grey { margin-left: 1px; padding: 4px 0; }
.gthumb { width: 12px; height: 14px; background: linear-gradient(90deg, #f4f4f4, #c4c4c4); border: 1px solid #aaa; margin-bottom: 12px; }
.gfoot { flex: 1; display: flex; align-items: center; padding: 0 26px 0 8px; gap: 16px; }
.p-stroke { height: 262px; }
.stroke { padding: 5px 0 0 2px; display: flex; flex-direction: column; }
.row { display: flex; align-items: center; height: 17px; margin-bottom: 5.500px; font-size: 11px; flex: none; }
.l46 { width: 46px; text-align: right; margin-right: 2px; white-space: nowrap; color: #222; }
.panelpt { width: 70px; margin: 0; height: 18px; }
.seg { width: 50px; height: 17px; display: flex; background: #c4c4c4; padding: 1px; gap: 1px; }
.seg i { flex: 1; display: flex; align-items: center; justify-content: center; }
.seg i.on { background: #a8a8a8; border: 1px solid #555; border-radius: 2px; }
.cap { width: 9px; height: 8px; border-top: 2px solid #222; border-left: 2px solid #888; background: #ddd; }
.sq2 { width: 10px; height: 10px; border: 2px solid #666; background: #ccc; }
.limit { margin-left: 9px; width: 27px; white-space: nowrap; }
.lim { width: 33px; height: 18px; display: flex; align-items: center; background: #fff; font: 9px "Liberation Sans", sans-serif; }
.lim em { margin-left: 4px; }
.x { margin-left: 3px; font: bold 8px "Liberation Sans", sans-serif; color: #555; }
.rule { width: 173px; margin: 0 0 4px 0; border: 0; border-top: 1px solid #aaa; border-bottom: 1px solid #eee; height: 2px; flex: none; }
.rule.r-a { margin-top: -1px; margin-bottom: 3px; }
.row.dash { padding-right: 14px; height: 14px; margin-bottom: 5px; }
.check { width: 11px; height: 11px; background: #e8e8e8; border: 1px solid #aaa; margin-right: 3px; }
.dash label { color: #333; }
.dashb { margin-left: 7px; }
.boxes { display: flex; gap: 3.300px; height: 15px; flex: none; }
.boxes i { width: 26px; border: 1px solid #aaa; background: #d6d6d6; }
.boxlabels { display: flex; gap: 3.300px; height: 18px; flex: none; }
.boxlabels span { width: 26px; text-align: center; color: #aaa; font-size: 11px; line-height: 18px; white-space: nowrap; }
.arrows label, .scale label, .align label { width: 27px; white-space: nowrap; margin-right: 1px; }
.row.arrows { height: 18px; margin-bottom: 2px; padding-right: 16px; }
.asel { width: 38px; height: 17px; background: #fff; display: flex; align-items: center; padding-left: 3px; margin-right: 11px; }
.asel i { flex: 1; height: 1.500px; background: #444; margin-right: 2px; }
.dropbtn { width: 7px; height: 13px; background: #ddd; border: 1px solid #666; border-radius: 2px; position: relative; flex: none; margin-right: 1px; }
.dropbtn::after { content: ""; position: absolute; left: 0; top: 4px; border-left: 2.500px solid transparent; border-right: 2.500px solid transparent; border-top: 3px solid #222; }
.row.scale { height: 18px; margin-bottom: 4px; padding-right: 16px; }
.num { width: 38px; height: 18px; background: #ccc; border: 1px solid #bbb; display: flex; align-items: center; justify-content: space-between; font: 9px "Liberation Sans", sans-serif; color: #888; padding-left: 3px; }
.num .rt { border-left-color: #888; }
.pcs { width: 11px; padding-left: 2px; font: 8px "Liberation Sans", sans-serif; }
.alignbox { width: 40px; height: 18px; background: #ccc; display: flex; align-items: center; justify-content: space-around; }
.row.align { margin-bottom: 2px; height: 18px; }
.rule.r-b { margin: 3px 0 2px; }
.profile label { width: 47px; white-space: nowrap; }
.psel { width: 85px; height: 17px; background: #fff; display: flex; align-items: center; padding-left: 5px; }
.psel i { flex: 1; height: 1.500px; background: #000; }
.psel span { margin: 0 3px 0 5px; }
.pi { margin-left: 7px; }
.p-layers { flex: 1; margin: 0; min-height: 0; }
.p-layers > .pbody { min-height: 0; }
.layer { height: 18px; margin-left: 0; display: flex; align-items: stretch; border-top: 1px solid #333; border-bottom: 1px solid #222; background: #e4e4e4; }
.lvis { width: 16px; display: flex; align-items: center; justify-content: center; background: #aaa; }
.llock { width: 12px; margin: 1px 2px; background: #d4d4d4; border: 1px solid #bbb; }
.lcol { width: 5px; margin: 2px 1px 2px 0; background: #5f8cff; }
.lexp { width: 14px; display: flex; align-items: center; justify-content: center; border-left: 2px solid #333; margin-left: 2px; background: #d6d6d6; }
.lsel { flex: 1; background: #3a9bff; display: flex; align-items: center; position: relative; color: #fff; padding-left: 1px; font-size: 12px; }
.thumb { width: 15px; height: 14px; border: 1px solid #111; background: #fff; display: flex; align-items: center; margin-right: 2px; }
.thumb i { flex: 1; height: 5px; background: linear-gradient(90deg, #c00, #00c, #f0f, #080, #fc0, #00c); }
.lname { white-space: nowrap; }
.ring { width: 9px; height: 9px; border: 2px solid #1c4f90; border-radius: 50%; margin-right: 12px; }
.corner { position: absolute; right: 0; top: 0; border-top: 5px solid #111; border-left: 5px solid transparent; }
.pfoot.layersfoot { justify-content: flex-end; gap: 14px; padding-right: 8px; }
.lcount { margin-right: auto; margin-left: 7px; font-size: 11px; white-space: nowrap; }
```
FILE: logo.js
```js
// Sequence logo data: bottom-to-top letter stacks, heights in bits, per position.
// A lowercase letter is drawn in capitals with the colour of the letter E.
var stacks = [
 "A.08 R4.07","A.1 N.15 T.28 S.35 C1.62","A.05 P.05 R.12 S.2 G3.05","A.12 K3.93","Q.3 S3.6","A.03 C4.25",
 "A.04 R4.16","R.08 E.27 L3.35","R4.3","W4.3","A.05 Q.1 S.1 K.1 E.1 L.18 T.28 I.27","S.05 N4.13","H.37 Q.38 Y2.53",
 "A.05 L4.13","R.1 S.16 D.24 K.28 R2.07","S.13 P3.9","R.1 S.15 G.25 N.34 D1.17","A.05 V.43 L.95 I1.32","E.09 N.22 R.33 K2.33",
 "H.33 K.52 R2.35","W.05 S.1 D.15 R.2 G2.4","S.08 E.1 P.12 K.14 R.09 A.16 N.3","W.26 L.22 I.37 F2","T.05 S1.47 T1.62",
 "A.1 S.1 N.08 D.16 P.28 E.34","E.06 H.22 D.32 Q.4 E1.2","E.75 f1.88 E1.67","V.1 Q.34 D.49 E1.92","A.07 K.1 R.2 D.2 Q.22 E.24",
 "A.12 M.18 R.12 I.33 T.36 L.64","V.33 L.53 I2.36","N.08 S.1 M.14 V.25 L.57 I1.15","S.08 N.08 V.1 S.1 Q.1 R.15 K.18 E.22",
 "N.08 S.1 V.09 A.5 L2.17","V.21 Q.22 H3.1","A.1 N.1 K.24 R.18 S.47 A.64","N.04 S.06 H.15 R.14 K.13 I.14 Y.18 L.32",
 "V.2 H.1 L.1 I.2 W.2 L1.05","G4.25","A.05 S.26 N3.47","K1.55 R1.77","W4.3","A.05 A.78 S2.13","A.07 N.08 Q.14 E.13 A.14 L.2 K.17 A.08",
 "M.27 I3.66","S.14 A3.88","N.05 E.05 G.15 S.2 A.24 R.26 K.26","N.05 K.1 Q.15 Y.1 L.15 H.25 R.3","A.04 Y.28 F.26 L2.69","S.16 N.24 P3.1"
];
var adv = {A:.72,C:.72,D:.72,E:.667,F:.611,G:.778,H:.722,I:.278,K:.722,L:.611,M:.833,N:.722,P:.667,Q:.778,R:.722,S:.667,T:.611,V:.667,W:.944,Y:.667};
var NS = "http://www.w3.org/2000/svg", svg = document.getElementById("logo");
var Y0 = 484, PX = 33, X0 = 191, DX = 14.02, FS = 20;
function el(name, attrs, txt) {
  var e = document.createElementNS(NS, name);
  for (var k in attrs) e.setAttribute(k, attrs[k]);
  if (txt !== undefined) e.textContent = txt;
  svg.appendChild(e);
  return e;
}
stacks.forEach(function (s, i) {
  var cx = X0 + i * DX, cum = 0;
  s.split(" ").forEach(function (tok) {
    var raw = tok[0], L = raw.toUpperCase(), h = parseFloat(tok.slice(1));
    var w = L === "I" ? 3.4 : L === "W" ? 15 : 13.6;
    var ink = L === "I" ? .14 : L === "W" ? .94 : adv[L] - .09;
    var sx = w / (ink * FS), sy = (h * PX) / (.716 * FS);
    var y = Y0 - cum * PX;
    el("text", {"class": "lt " + (raw === L ? L : "E"), transform: "translate(" + cx.toFixed(2) + " " + y.toFixed(2) + ") scale(" + sx.toFixed(3) + " " + sy.toFixed(3) + ")"}, L);
    cum += h;
  });
  el("text", {"class": "num-l", transform: "translate(" + (cx + 3.5).toFixed(2) + " 487.5) rotate(-90)"}, i + 1);
  el("line", {x1: cx, x2: cx, y1: 484, y2: 486, stroke: "#333", "stroke-width": .6});
});
el("line", {x1: 183.5, x2: 183.5, y1: 341, y2: 484.5, stroke: "#333", "stroke-width": 1});
for (var t = 0; t <= 4; t++) {
  var ty = Y0 - t * 33;
  el("line", {x1: 180.5, x2: 183.5, y1: ty, y2: ty, stroke: "#333", "stroke-width": .8});
  el("text", {"class": "tick-l", x: 179.5, y: ty + 3.8}, t);
}
el("text", {"class": "bits", transform: "translate(170 412) rotate(-90)"}, "bits");
el("text", {"class": "meme", x: 815, y: 505}, "MEME (no SSC) 08.06.19 12:41");
```
